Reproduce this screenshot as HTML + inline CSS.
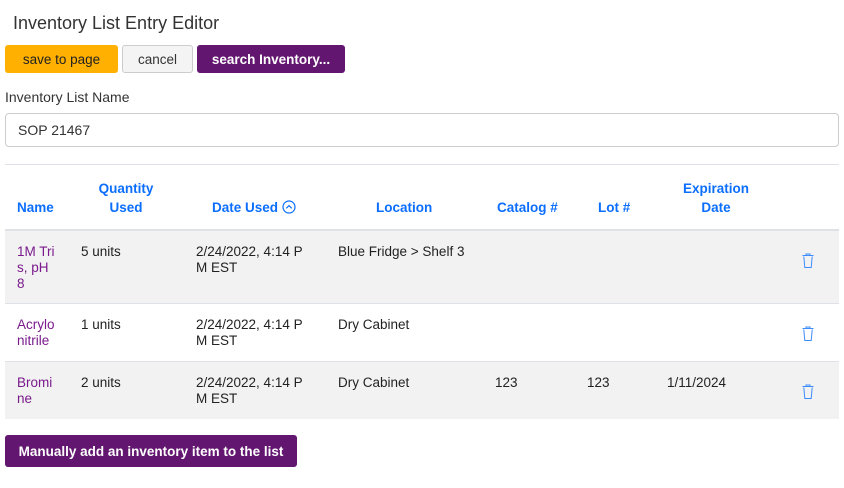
<!DOCTYPE html>
<html><head><style>
body{margin:0;width:844px;height:488px;background:#fff;font-family:"Liberation Sans",sans-serif;color:#222;position:relative;overflow:hidden}
.a{position:absolute}
.t{font-size:13.5px;line-height:16px}
.h{font-size:13.5px;line-height:19px;color:#0b6efd;font-weight:bold;text-align:center}
.btn{position:absolute;top:45px;height:28px;border-radius:3px;font-size:13.5px;line-height:29px;text-align:center;box-sizing:border-box}
.pl{color:#7a1a8c}
.tr{position:absolute;left:5px;width:834px}
</style></head><body>
<div class="a" style="left:13px;top:13px;font-size:18px;color:#333">Inventory List Entry Editor</div>
<div class="btn" style="left:5px;width:113px;background:#ffb000;color:#222">save to page</div>
<div class="btn" style="left:122px;width:71px;background:#f4f4f4;border:1px solid #ccc;color:#333;line-height:27px">cancel</div>
<div class="btn" style="left:197px;width:148px;background:#63166f;color:#fff;font-weight:bold">search Inventory...</div>
<div class="a t" style="left:5px;top:89px;font-size:14px;color:#333">Inventory List Name</div>
<div class="a" style="left:5px;top:113px;width:834px;height:34px;box-sizing:border-box;border:1px solid #ccc;border-radius:4px;padding-left:12px;line-height:32px;font-size:14px;color:#333">SOP 21467</div>
<div class="tr" style="top:164px;height:1px;background:#dee2e6"></div>
<div class="tr" style="top:229px;height:2px;background:#dee2e6"></div>
<div class="tr" style="top:231px;height:72px;background:#f2f2f2"></div>
<div class="tr" style="top:303px;height:1px;background:#dee2e6"></div>
<div class="tr" style="top:361px;height:1px;background:#dee2e6"></div>
<div class="tr" style="top:362px;height:57px;background:#f2f2f2"></div>
<div class="a h" style="left:17px;top:198px">Name</div>
<div class="a h" style="left:90px;top:179px;width:72px">Quantity<br>Used</div>
<div class="a h" style="left:212px;top:198px">Date Used <svg width="14" height="14" viewBox="0 0 14 14" style="vertical-align:-2px"><circle cx="7" cy="7" r="6" fill="none" stroke="#0b6efd" stroke-width="1.2"/><path d="M4.3 8.3 7 5.6 9.7 8.3" fill="none" stroke="#0b6efd" stroke-width="1.2"/></svg></div>
<div class="a h" style="left:376px;top:198px">Location</div>
<div class="a h" style="left:497px;top:198px">Catalog #</div>
<div class="a h" style="left:598px;top:198px">Lot #</div>
<div class="a h" style="left:676px;top:179px;width:80px">Expiration<br>Date</div>

<div class="a t pl" style="left:17px;top:244px;width:44px">1M Tri<br>s, pH<br>8</div>
<div class="a t" style="left:81px;top:244px">5 units</div>
<div class="a t" style="left:196px;top:244px">2/24/2022, 4:14 P<br>M EST</div>
<div class="a t" style="left:338px;top:244px">Blue Fridge &gt; Shelf 3</div>

<div class="a t pl" style="left:17px;top:317px">Acrylo<br>nitrile</div>
<div class="a t" style="left:81px;top:317px">1 units</div>
<div class="a t" style="left:196px;top:317px">2/24/2022, 4:14 P<br>M EST</div>
<div class="a t" style="left:338px;top:317px">Dry Cabinet</div>

<div class="a t pl" style="left:17px;top:375px">Bromi<br>ne</div>
<div class="a t" style="left:81px;top:375px">2 units</div>
<div class="a t" style="left:196px;top:375px">2/24/2022, 4:14 P<br>M EST</div>
<div class="a t" style="left:338px;top:375px">Dry Cabinet</div>
<div class="a t" style="left:495px;top:375px">123</div>
<div class="a t" style="left:587px;top:375px">123</div>
<div class="a t" style="left:667px;top:375px">1/11/2024</div>

<svg class="a" style="left:801px;top:253px" width="14" height="16" viewBox="0 0 14 16"><path d="M1.5 2.5h11M5 2.5V1h4v1.5M2.8 3.5l1 11h6.4l1-11" fill="none" stroke="#3d8bfd" stroke-width="1"/></svg>
<svg class="a" style="left:801px;top:326px" width="14" height="16" viewBox="0 0 14 16"><path d="M1.5 2.5h11M5 2.5V1h4v1.5M2.8 3.5l1 11h6.4l1-11" fill="none" stroke="#3d8bfd" stroke-width="1"/></svg>
<svg class="a" style="left:801px;top:384px" width="14" height="16" viewBox="0 0 14 16"><path d="M1.5 2.5h11M5 2.5V1h4v1.5M2.8 3.5l1 11h6.4l1-11" fill="none" stroke="#3d8bfd" stroke-width="1"/></svg>

<div class="a" style="left:5px;top:435px;width:292px;height:32px;background:#63166f;color:#fff;border-radius:3px;font-weight:bold;font-size:13.5px;line-height:33px;text-align:center">Manually add an inventory item to the list</div>
</body></html>
